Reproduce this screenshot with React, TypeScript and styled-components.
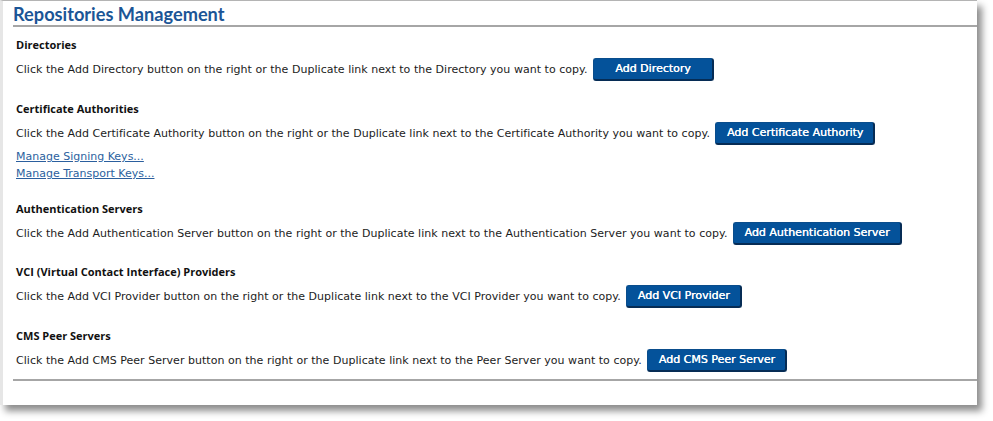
import React from "react";
import styled, { createGlobalStyle } from "styled-components";

const Global = createGlobalStyle`
  html, body { margin: 0; padding: 0; background: #ffffff; }
  #root { width: 993px; height: 421px; overflow: hidden; }
`;

const Frame = styled.div`
  width: 993px;
  height: 421px;
  background: #ffffff;
  box-sizing: border-box;
`;

const Panel = styled.div`
  width: 977px;
  height: 405px;
  box-sizing: border-box;
  background: #ffffff;
  border-left: 3px solid #e6e6e6;
  border-top: 1px solid #b4b4b4;
  box-shadow: 5px 6px 7px rgba(0, 0, 0, 0.45);
  display: flex;
  flex-direction: column;
  padding-left: 10px;
`;

const Title = styled.h1`
  margin: 0;
  height: 26px;
  box-sizing: border-box;
  padding-top: 3px;
  font-family: "Lato", "Open Sans", sans-serif;
  font-weight: 700;
  font-size: 18.2px;
  line-height: 20px;
  color: #1b5596;
  border-bottom: 2px solid #a6a6a6;
`;

const Body = styled.div`
  padding: 11px 0 0 3px;
  display: flex;
  flex-direction: column;
`;

const Section = styled.section<{ $gap: number }>`
  display: flex;
  flex-direction: column;
  margin-bottom: ${(p) => p.$gap}px;
`;

const Heading = styled.h2`
  margin: 0 0 5px 0;
  font-family: "Open Sans", "DejaVu Sans", sans-serif;
  font-weight: 700;
  font-size: 11px;
  line-height: 14px;
  color: #111111;
`;

const Row = styled.div`
  display: flex;
  align-items: center;
  gap: 5px;
  font-family: "DejaVu Sans", Verdana, sans-serif;
  font-size: 11px;
  letter-spacing: 0.03px;
  color: #1c1c1c;
  height: 24px;
`;

const Button = styled.button<{ $min?: number }>`
  height: 23px;
  min-width: ${(p) => p.$min ?? 0}px;
  padding: 0 10px 0 11px;
  box-sizing: border-box;
  border: 1px solid #0a4d8c;
  border-right: 2px solid #062c55;
  border-bottom: 2px solid #062c55;
  border-radius: 3px;
  background: #04529a;
  color: #ffffff;
  font-family: "DejaVu Sans", Verdana, sans-serif;
  font-weight: 400;
  font-size: 11px;
  text-shadow: 0.3px 0 0 #ffffff;
  cursor: pointer;
`;

const Links = styled.div`
  display: flex;
  flex-direction: column;
  gap: 3px;
  margin-top: 5px;
`;

const Link = styled.a`
  font-family: "DejaVu Sans", Verdana, sans-serif;
  font-size: 11px;
  line-height: 14px;
  color: #2b5f9e;
  text-decoration: underline;
  cursor: pointer;
`;

const Rule = styled.div`
  height: 0;
  border-top: 2px solid #a6a6a6;
`;

type Sec = { title: string; text: string; button: string; min?: number; links?: string[]; gap: number };

const sections: Sec[] = [
  {
    title: "Directories",
    text: "Click the Add Directory button on the right or the Duplicate link next to the Directory you want to copy.",
    button: "Add Directory",
    min: 121,
    gap: 21,
  },
  {
    title: "Certificate Authorities",
    text: "Click the Add Certificate Authority button on the right or the Duplicate link next to the Certificate Authority you want to copy.",
    button: "Add Certificate Authority",
    links: ["Manage Signing Keys...", "Manage Transport Keys..."],
    gap: 21,
  },
  {
    title: "Authentication Servers",
    text: "Click the Add Authentication Server button on the right or the Duplicate link next to the Authentication Server you want to copy.",
    button: "Add Authentication Server",
    gap: 20,
  },
  {
    title: "VCI (Virtual Contact Interface) Providers",
    text: "Click the Add VCI Provider button on the right or the Duplicate link next to the VCI Provider you want to copy.",
    button: "Add VCI Provider",
    gap: 21,
  },
  {
    title: "CMS Peer Servers",
    text: "Click the Add CMS Peer Server button on the right or the Duplicate link next to the Peer Server you want to copy.",
    button: "Add CMS Peer Server",
    gap: 7,
  },
];

export default function App() {
  return (
    <>
      <Global />
      <Frame>
        <Panel>
          <Title>Repositories Management</Title>
          <Body>
            {sections.map((s) => (
              <Section key={s.title} $gap={s.gap}>
                <Heading>{s.title}</Heading>
                <Row>
                  <span>{s.text}</span>
                  <Button $min={s.min}>{s.button}</Button>
                </Row>
                {s.links && (
                  <Links>
                    {s.links.map((l) => (
                      <Link key={l}>{l}</Link>
                    ))}
                  </Links>
                )}
              </Section>
            ))}
          </Body>
          <Rule />
        </Panel>
      </Frame>
    </>
  );
}
